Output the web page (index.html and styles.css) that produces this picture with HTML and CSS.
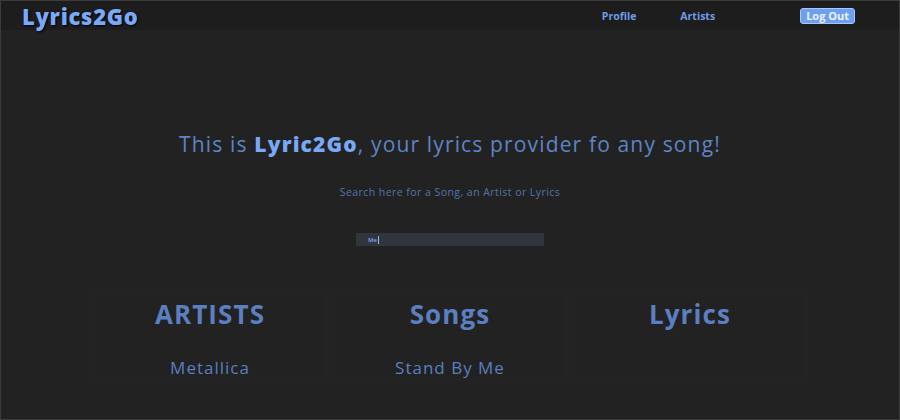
FILE: index.html
```html
<!DOCTYPE html>
<html>
<head>
<meta charset="utf-8">
<link rel="stylesheet" href="styles.css">
</head>
<body>
<div class="page">
  <nav class="nav">
    <div class="logo">Lyrics2Go</div>
    <div class="links">
      <a class="link">Profile</a>
      <a class="link link-artists">Artists</a>
      <button class="logout">Log Out</button>
    </div>
  </nav>
  <main class="main">
    <h1 class="headline">This is <b>Lyric2Go</b>, your lyrics provider fo any song!</h1>
    <p class="sub">Search here for a Song, an Artist or Lyrics</p>
    <div class="search"><span class="query">Me</span><span class="caret"></span></div>
    <section class="cards">
      <div class="card"><h2 class="card-title">ARTISTS</h2><div class="item">Metallica</div></div>
      <div class="card"><h2 class="card-title">Songs</h2><div class="item">Stand By Me</div></div>
      <div class="card"><h2 class="card-title">Lyrics</h2></div>
    </section>
  </main>
</div>
</body>
</html>
```
FILE: styles.css
```css
html, body { margin: 0; padding: 0; }
body { background: #222222; font-family: "Open Sans", "Noto Sans", sans-serif; }
.page {
  width: 900px; height: 420px; box-sizing: border-box;
  border: 1px solid #3c3c3c; background: #222222;
  display: flex; flex-direction: column; overflow: hidden;
}
.nav {
  height: 29px; background: #1d1d1d; display: flex; align-items: center;
  padding: 0 44px 0 21px; flex-shrink: 0;
}
.logo {
  font-family: "Open Sans", sans-serif; font-weight: 800; font-size: 22px;
  color: #7aa9f7; letter-spacing: 0.7px;
  text-shadow: 1px 1px 2px #000;
}
.links { margin-left: auto; display: flex; align-items: center; }
.link { font-size: 10.5px; font-weight: 700; color: #6e9ce8; margin-right: 44px; }
.link-artists { margin-right: 85px; }
.logout {
  font-family: "Open Sans", sans-serif; font-size: 11px; font-weight: 700;
  color: #eef3ff; background: #6f9ff2; border: 1px solid #a9c6f7;
  border-radius: 3px; height: 16px; padding: 0 5px; line-height: 12px;
}
.main { display: flex; flex-direction: column; align-items: center; }
.headline {
  margin: 100px 0 0; font-weight: 400; font-size: 21px; color: #5e84c6;
  letter-spacing: 1.15px;
}
.headline b { font-weight: 800; color: #79a8f6; }
.sub { margin: 27px 0 0; font-size: 10.5px; color: #5674ab; letter-spacing: 0.45px; }
.search {
  margin-top: 34px; width: 188px; height: 13px; background: #31353e;
  display: flex; align-items: center; padding-left: 12px; box-sizing: border-box;
}
.query { font-size: 6px; color: #7ea6ef; font-weight: 600; }
.caret { width: 1px; height: 8px; background: #9bb8f0; margin-left: 1px; }
.cards {
  margin-top: 46px; display: flex; gap: 6px;
}
.card {
  width: 234px; height: 88px; box-sizing: border-box;
  border: 1px solid #252525; border-radius: 3px;
  display: flex; flex-direction: column; align-items: center;
}
.card-title {
  margin: 3px 0 0; font-size: 26px; font-weight: 700; color: #5b7fc0;
  letter-spacing: 1.1px;
}
.item { margin-top: 24px; font-size: 17px; color: #5b7fc0; letter-spacing: 1px; }
```
